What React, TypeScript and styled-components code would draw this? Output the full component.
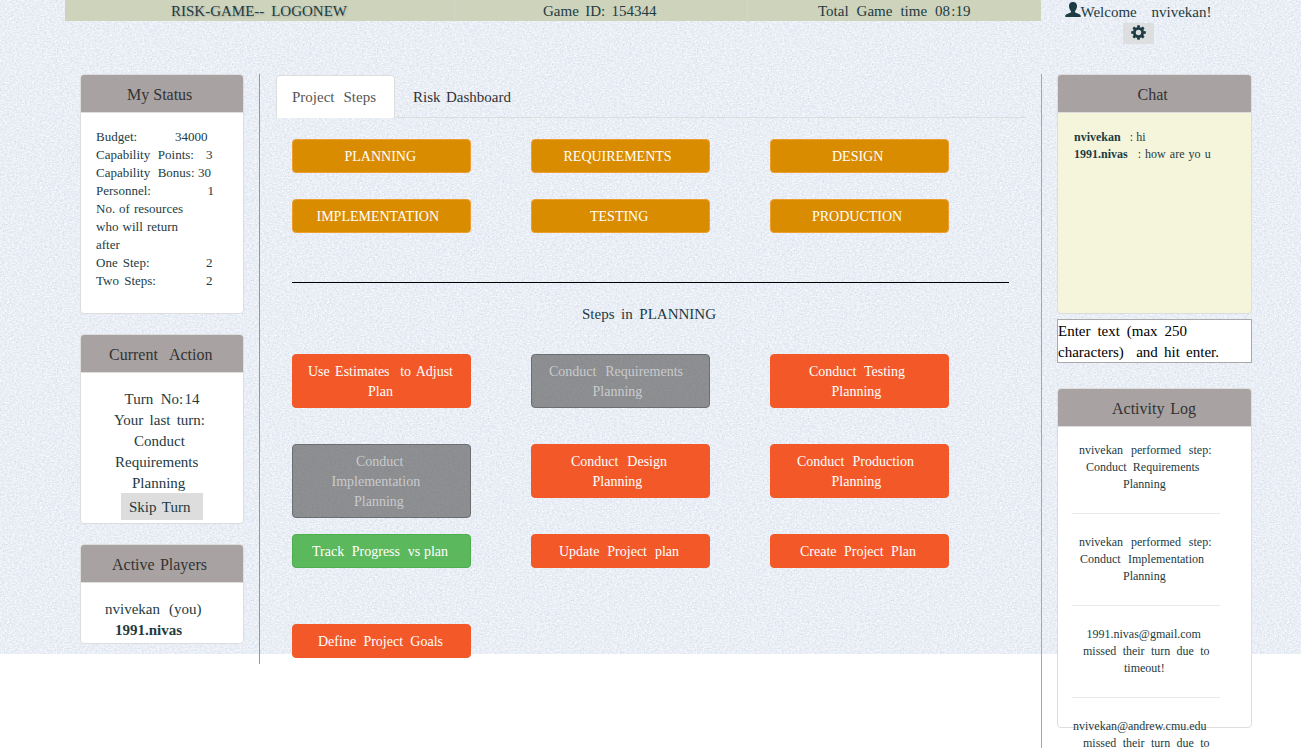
import React from "react";
import styled, { createGlobalStyle, css } from "styled-components";

const weave = (freq: string, seed: number, matrix: string) =>
  `url("data:image/svg+xml,${encodeURIComponent(
    `<svg xmlns='http://www.w3.org/2000/svg' width='320' height='320'><filter id='n' x='0' y='0' width='100%' height='100%' color-interpolation-filters='sRGB'><feTurbulence type='fractalNoise' baseFrequency='${freq}' numOctaves='2' seed='${seed}' stitchTiles='stitch'/><feColorMatrix type='matrix' values='${matrix}'/></filter><rect width='320' height='320' filter='url(#n)'/></svg>`
  )}")`;

const GlobalStyle = createGlobalStyle`
  * { box-sizing: border-box; }
  html, body { margin: 0; padding: 0; background: #fff; overflow: hidden; }
  body {
    font-family: "Liberation Serif", "Times New Roman", serif;
    font-size: 15px;
    line-height: 21px;
    color: #1c3b42;
  }
`;

const Page = styled.div`
  height: 748px;
  overflow: hidden;
  background-color: #e9eef6;
  background-image:
    linear-gradient(transparent 654px, #fff 654px),
    ${weave("0.4 0.85", 4, "0 0 0 0 1  0 0 0 0 1  0 0 0 0 1  1.8 0 0 0 -0.7")},
    ${weave("0.85 0.5", 9, "0 0 0 0 0.78  0 0 0 0 0.82  0 0 0 0 0.89  0 1.3 0 0 -0.5")};
  background-size: 100% 748px, 320px 320px, 320px 320px;
`;

const Backdrop = styled.div`
  height: 748px;
  padding-left: 65px;
  display: grid;
  grid-template-columns: 976px 211px;
  grid-template-rows: 74px 1fr;
`;

const TopBar = styled.header`
  display: grid;
  grid-template-columns: 390px 293px 293px;
  height: 21px;
  background: #ced3bc;
`;

const TopCell = styled.div<{ $shadow?: boolean }>`
  padding-top: 1px;
  border-right: 1px solid #d3d7c3;
  ${(p) => p.$shadow && css`text-shadow: 1px 1px 2px #a4ac9f;`}
  &:last-child { border-right: 0; }
`;

const Account = styled.div`
  padding-top: 2px;
  padding-left: 24px;
`;

const AccountRow = styled.div`
  display: flex;
  height: 21px;
`;

const GearButton = styled.button`
  display: flex;
  align-items: center;
  justify-content: center;
  width: 31px;
  height: 21px;
  margin-left: 58px;
  padding: 0 0 2px;
  border: 0;
  background: #dddedf;
  color: #1c3b42;
`;

const Main = styled.main`
  display: grid;
  grid-template-columns: 195px 781px;
  align-items: start;
`;

const LeftColumn = styled.aside`
  display: flex;
  flex-direction: column;
  gap: 20px;
  height: 590px;
  padding-left: 15px;
  border-right: 1px solid #94979c;
`;

const RightColumn = styled.aside`
  height: 674px;
  padding-left: 15px;
  border-left: 1px solid #a3a7ab;
`;

const Panel = styled.section<{ $h: number; $w: number; $tone?: string }>`
  width: ${(p) => p.$w}px;
  height: ${(p) => p.$h}px;
  flex: none;
  border: 1px solid #ddd;
  border-radius: 4px;
  background: ${(p) => p.$tone || "#fff"};
`;

const PanelHead = styled.h3`
  margin: 0;
  height: 38px;
  padding-top: 10px;
  border-bottom: 1px solid #ddd;
  border-radius: 3px 3px 0 0;
  background: #a8a2a2;
  color: #333;
  font-weight: normal;
  font-size: 16px;
  line-height: 20px;
`;

const PanelBody = styled.div<{ $size: number; $line: number; $top?: number; $left?: number }>`
  padding: ${(p) => p.$top ?? 15}px 0 0 ${(p) => p.$left ?? 15}px;
  font-size: ${(p) => p.$size}px;
  line-height: ${(p) => p.$line}px;
`;

const LineBox = styled.div<{ $x: number; $w?: number; $ls: number }>`
  margin-left: ${(p) => p.$x}px;
  white-space: nowrap;
  letter-spacing: ${(p) => p.$ls}px;
  ${(p) => p.$w && css`
    width: ${p.$w}px;
    text-align: justify;
    text-align-last: justify;
  `}
`;

type LineProps = { x: number; w?: number; ls?: number; children: string };

// A line of text set to a given measure; doubled spaces keep their width.
const Line = ({ x, w, ls = 0, children }: LineProps) => (
  <LineBox $x={x} $w={w} $ls={ls}>{children.replace(/ {2}/g, "\u00a0 ")}</LineBox>
);

const StatusRow = styled.div`
  display: flex;
  height: 18px;
`;

const StatusLabel = styled.div<{ $w: number }>`
  width: ${(p) => p.$w}px;
  flex: none;
`;

const SkipButton = styled.button`
  display: block;
  width: 82px;
  height: 27px;
  margin: -1px 0 0 25px;
  padding: 2px 0 0;
  border: 0;
  background: #ddd;
  color: inherit;
  font: inherit;
  text-align: left;
`;

const ChatLine = styled.div`
  display: flex;
  height: 17px;
`;

const ChatInput = styled.div`
  width: 195px;
  height: 44px;
  margin: 5px 0 25px;
  padding-top: 1px;
  border: 1px solid #a9a9a9;
  background: #fff;
  color: #000;
`;

const Center = styled.section`
  padding-left: 16px;
`;

const Tabs = styled.nav`
  display: flex;
  width: 751px;
  height: 44px;
  padding-top: 1px;
  border-bottom: 1px solid #ddd;
`;

const Tab = styled.div<{ $active?: boolean }>`
  width: ${(p) => (p.$active ? 119 : 130)}px;
  height: 43px;
  padding-top: 11px;
  border: 1px solid transparent;
  border-bottom: 0;
  border-radius: 4px 4px 0 0;
  color: #333;
  ${(p) => p.$active && css`
    border-color: #ddd;
    background: #fff;
    color: #555;
  `}
`;

const Board = styled.div`
  padding: 21px 0 0 16px;
`;

const ButtonGrid = styled.div<{ $row: number }>`
  display: grid;
  grid-template-columns: repeat(3, 239px);
  grid-auto-rows: ${(p) => p.$row}px;
  align-items: start;
`;

const tones = {
  phase: ["#da8c00", "#eb9f2f", "#fff"],
  open: ["#f35828", "#f35828", "#fff"],
  done: ["rgba(96, 96, 96, 0.68)", "#6b6e72", "#c9cbce"],
  current: ["#5cb85c", "#4cae4c", "#fff"],
} as const;

type Tone = keyof typeof tones;

const StepButton = styled.button<{ $tone: Tone }>`
  display: block;
  width: 179px;
  padding: 7px 0 5px;
  border: 1px solid ${(p) => tones[p.$tone][1]};
  border-radius: 4px;
  background: ${(p) => tones[p.$tone][0]};
  color: ${(p) => tones[p.$tone][2]};
  font: 14px/20px "Liberation Serif", "Times New Roman", serif;
  text-align: left;
`;

const Divider = styled.hr`
  width: 717px;
  height: 1px;
  margin: 23px 0 21px;
  border: 0;
  background: #000;
`;

const StepsTitle = styled.div`
  height: 50px;
`;

const LogEntry = styled.div`
  height: 72px;
  width: 148px;
  margin-bottom: 20px;
  border-bottom: 1px solid #e9e9e9;
  white-space: nowrap;
`;

type L = [string, number, number?, number?];
type Step = { tone: Tone; lines: L[] };

const phases: Step[] = [
  { tone: "phase", lines: [["PLANNING", 51.5]] },
  { tone: "phase", lines: [["REQUIREMENTS", 31.5]] },
  { tone: "phase", lines: [["DESIGN", 61]] },
  { tone: "phase", lines: [["IMPLEMENTATION", 23.5]] },
  { tone: "phase", lines: [["TESTING", 58]] },
  { tone: "phase", lines: [["PRODUCTION", 41]] },
];

const steps: Step[] = [
  { tone: "open", lines: [["Use Estimates  to Adjust", 15, 145], ["Plan", 75]] },
  { tone: "done", lines: [["Conduct  Requirements", 17, 134], ["Planning", 60.5]] },
  { tone: "open", lines: [["Conduct  Testing", 38, 96], ["Planning", 60.5]] },
  { tone: "done", lines: [["Conduct", 63], ["Implementation", 38.5], ["Planning", 61]] },
  { tone: "open", lines: [["Conduct  Design", 39, 96], ["Planning", 60.5]] },
  { tone: "open", lines: [["Conduct  Production", 26, 117], ["Planning", 60.5]] },
  { tone: "current", lines: [["Track  Progress  vs plan", 19, 136]] },
  { tone: "open", lines: [["Update Project plan", 27, 120]] },
  { tone: "open", lines: [["Create Project Plan", 29, 116]] },
  { tone: "open", lines: [["Define Project Goals", 25, 125]] },
];

const status: { label: L; value?: string; at?: number }[] = [
  { label: ["Budget:", 0], value: "34000", at: 79 },
  { label: ["Capability  Points:", 0, 98], value: "3", at: 110 },
  { label: ["Capability  Bonus:", 0, 98.5], value: "30", at: 102 },
  { label: ["Personnel:", 0], value: "1", at: 111.5 },
  { label: ["No. of resources", 0, 87] },
  { label: ["who will return", 0, 82] },
  { label: ["after", 0] },
  { label: ["One Step:", 0, 53.5], value: "2", at: 110 },
  { label: ["Two Steps:", 0, 60], value: "2", at: 110 },
];

const log: L[][] = [
  [["nvivekan performed step:", 7, 132.5], ["Conduct Requirements", 14, 113.5], ["Planning", 51]],
  [["nvivekan performed step:", 7, 132.5], ["Conduct Implementation", 8, 124], ["Planning", 51]],
  [["1991.nivas@gmail.com", 14.5], ["missed their turn due to", 11, 126.5], ["timeout!", 52]],
  [["nvivekan@andrew.cmu.edu", 1], ["missed their turn due to", 11, 126.5], ["timeout!", 52]],
];

const Lines = ({ items }: { items: L[] }) => (
  <>
    {items.map(([t, x, w, ls], i) => (
      <Line key={i} x={x} w={w} ls={ls}>{t}</Line>
    ))}
  </>
);

const Steps = ({ items, row }: { items: Step[]; row: number }) => (
  <ButtonGrid $row={row}>
    {items.map((s, i) => (
      <StepButton key={i} $tone={s.tone}><Lines items={s.lines} /></StepButton>
    ))}
  </ButtonGrid>
);

const UserIcon = () => (
  <svg width="16" height="16" viewBox="0 0 16 16" fill="currentColor">
    <path d="M8 0C5.500 0 4 1.500 4 4c0 2 .8 3.900 1.900 4.900.4.6.3 1.300-.3 1.600L1.600 12.300C.7 12.700.3 13.300.3 14.200V15h15.400v-.8c0-.9-.4-1.500-1.300-1.900l-4-1.800c-.6-.3-.7-1-.3-1.600C11.200 7.900 12 6 12 4 12 1.500 10.500 0 8 0z" />
  </svg>
);

const GearIcon = () => (
  <svg width="15" height="15" viewBox="-7.5 -7.5 15 15">
    <circle r="4.1" fill="none" stroke="currentColor" strokeWidth="2.8" />
    {[0, 45, 90, 135, 180, 225, 270, 315].map((a) => (
      <path key={a} d="M-1.600-4.900L-1.200-7.300H1.200L1.600-4.900z" fill="currentColor" transform={`rotate(${a})`} />
    ))}
  </svg>
);

export default function App() {
  return (
    <Page>
      <GlobalStyle />
      <Backdrop>
        <TopBar>
          <TopCell $shadow><Line x={106} w={176}>RISK-GAME-- LOGONEW</Line></TopCell>
          <TopCell><Line x={88} w={113.5}>Game ID: 154344</Line></TopCell>
          <TopCell><Line x={70} w={152.5}>{"Total Game time 08\u200a:19"}</Line></TopCell>
        </TopBar>
        <Account>
          <AccountRow>
            <UserIcon />
            <Line x={-0.5} w={131}>Welcome  nvivekan!</Line>
          </AccountRow>
          <GearButton aria-label="Settings"><GearIcon /></GearButton>
        </Account>
        <Main>
          <LeftColumn>
            <Panel $w={164} $h={240}>
              <PanelHead><Line x={46} w={65}>My Status</Line></PanelHead>
              <PanelBody $size={13} $line={18}>
                {status.map((s, i) => (
                  <StatusRow key={i}>
                    <StatusLabel $w={s.at ?? 130}><Lines items={[s.label]} /></StatusLabel>
                    {s.value}
                  </StatusRow>
                ))}
              </PanelBody>
            </Panel>
            <Panel $w={164} $h={190}>
              <PanelHead><Line x={28} w={103.5}>Current  Action</Line></PanelHead>
              <PanelBody $size={15} $line={21} $top={16}>
                <Line x={28.5} w={75}>{"Turn  No:\u200a14"}</Line>
                <Line x={18} w={91}>Your last turn:</Line>
                <Line x={38}>Conduct</Line>
                <Line x={19}>Requirements</Line>
                <Line x={36}>Planning</Line>
                <SkipButton><Line x={8} w={61.5}>Skip Turn</Line></SkipButton>
              </PanelBody>
            </Panel>
            <Panel $w={164} $h={100}>
              <PanelHead><Line x={31} w={95}>Active Players</Line></PanelHead>
              <PanelBody $size={15} $line={21} $top={16}>
                <Line x={9} w={96.5}>nvivekan  (you)</Line>
                <b><Line x={19}>1991.nivas</Line></b>
              </PanelBody>
            </Panel>
          </LeftColumn>
          <Center>
            <Tabs>
              <Tab $active><Line x={15} w={84}>Project  Steps</Line></Tab>
              <Tab><Line x={17} w={98}>Risk Dashboard</Line></Tab>
            </Tabs>
            <Board>
              <Steps items={phases} row={60} />
              <Divider />
              <StepsTitle><Line x={290} w={134}>Steps in PLANNING</Line></StepsTitle>
              <Steps items={steps} row={90} />
            </Board>
          </Center>
        </Main>
        <RightColumn>
          <Panel $w={195} $h={240} $tone="#f5f5dc">
            <PanelHead><Line x={79.5}>Chat</Line></PanelHead>
            <PanelBody $size={12} $line={17} $top={16}>
              <ChatLine><b><Line x={1}>nvivekan</Line></b><Line x={9} w={16}>: hi</Line></ChatLine>
              <ChatLine><b><Line x={1}>1991.nivas</Line></b><Line x={10} w={73}>: how are yo u</Line></ChatLine>
            </PanelBody>
          </Panel>
          <ChatInput>
            <Line x={0} w={129}>Enter text (max 250</Line>
            <Line x={0} w={161}>characters)  and hit enter.</Line>
          </ChatInput>
          <Panel $w={195} $h={340}>
            <PanelHead><Line x={54} w={84}>Activity Log</Line></PanelHead>
            <PanelBody $size={12} $line={17} $left={14}>
              {log.map((entry, i) => (
                <LogEntry key={i}><Lines items={entry} /></LogEntry>
              ))}
            </PanelBody>
          </Panel>
        </RightColumn>
      </Backdrop>
    </Page>
  );
}
